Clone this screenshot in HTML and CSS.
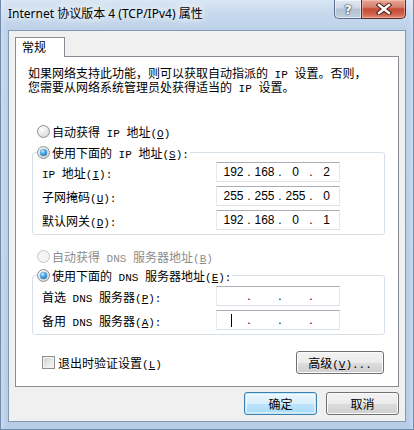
FILE: index.html
```html
<!DOCTYPE html>
<html lang="zh-CN">
<head>
<meta charset="utf-8">
<title>Internet 协议版本 4 (TCP/IPv4) 属性</title>
<link rel="stylesheet" href="styles.css">
</head>
<body>
<div class="window">
  <div class="titlebar">
    <div class="title">Internet 协议版本 4 (TCP/IPv4) 属性</div>
    <div class="caption">
      <div class="cap help"><span class="q">?</span></div>
      <div class="cap close">
        <svg width="16" height="12" viewBox="0 0 16 12">
          <path d="M3 2 L13 10 M13 2 L3 10" stroke="#4a1a14" stroke-width="4.4" stroke-linecap="square" fill="none"/>
          <path d="M3 2 L13 10 M13 2 L3 10" stroke="#ffffff" stroke-width="2.4" stroke-linecap="square" fill="none"/>
        </svg>
      </div>
    </div>
  </div>
  <div class="client">
    <div class="tabs"><div class="tab">常规</div></div>
    <div class="panel">
      <div class="desc">
        <div class="line">如果网络支持此功能，则可以获取自动指派的<span class="en"> IP </span>设置。否则，</div>
        <div class="line">您需要从网络系统管理员处获得适当的<span class="en"> IP </span>设置。</div>
      </div>

      <div class="radio-row first"><span class="radio"></span><span>自动获得<span class="en"> IP </span>地址<span class="en">(<u>O</u>)</span></span></div>

      <fieldset class="group">
        <legend class="radio-row"><span class="radio on"></span><span>使用下面的<span class="en"> IP </span>地址<span class="en">(<u>S</u>):</span></span></legend>
        <div class="rows">
          <div class="row"><span class="lbl"><span class="en">IP </span>地址<span class="en">(<u>I</u>):</span></span>
            <div class="ip"><span class="oct">192</span><span class="dot">.</span><span class="oct">168</span><span class="dot">.</span><span class="oct">0</span><span class="dot">.</span><span class="oct">2</span></div></div>
          <div class="row"><span class="lbl">子网掩码<span class="en">(<u>U</u>):</span></span>
            <div class="ip"><span class="oct">255</span><span class="dot">.</span><span class="oct">255</span><span class="dot">.</span><span class="oct">255</span><span class="dot">.</span><span class="oct">0</span></div></div>
          <div class="row"><span class="lbl">默认网关<span class="en">(<u>D</u>):</span></span>
            <div class="ip"><span class="oct">192</span><span class="dot">.</span><span class="oct">168</span><span class="dot">.</span><span class="oct">0</span><span class="dot">.</span><span class="oct">1</span></div></div>
        </div>
      </fieldset>

      <div class="radio-row dns-auto disabled"><span class="radio"></span><span>自动获得<span class="en"> DNS </span>服务器地址<span class="en">(<u>B</u>)</span></span></div>

      <fieldset class="group dns">
        <legend class="radio-row"><span class="radio on"></span><span>使用下面的<span class="en"> DNS </span>服务器地址<span class="en">(<u>E</u>):</span></span></legend>
        <div class="rows">
          <div class="row"><span class="lbl">首选<span class="en"> DNS </span>服务器<span class="en">(<u>P</u>):</span></span>
            <div class="ip"><span class="oct"></span><span class="dot">.</span><span class="oct"></span><span class="dot">.</span><span class="oct"></span><span class="dot">.</span><span class="oct"></span></div></div>
          <div class="row"><span class="lbl">备用<span class="en"> DNS </span>服务器<span class="en">(<u>A</u>):</span></span>
            <div class="ip"><span class="oct"><span class="caret"></span></span><span class="dot">.</span><span class="oct"></span><span class="dot">.</span><span class="oct"></span><span class="dot">.</span><span class="oct"></span></div></div>
        </div>
      </fieldset>

      <div class="foot">
        <div class="check-row"><span class="check"></span><span>退出时验证设置<span class="en">(<u>L</u>)</span></span></div>
        <button class="btn adv">高级<span class="en">(<u>V</u>)...</span></button>
      </div>
    </div>
    <div class="dlg-btns">
      <button class="btn default">确定</button>
      <button class="btn">取消</button>
    </div>
  </div>
</div>
</body>
</html>
```
FILE: styles.css
```css
* { box-sizing: border-box; }
html, body { margin: 0; padding: 0; background: #ffffff; }

.window {
  width: 414px;
  height: 430px;
  display: flex;
  flex-direction: column;
  border: 1px solid #6f8aab;
  border-top: none;
  background:
    linear-gradient(90deg, rgba(255,255,255,0.25) 0, rgba(255,255,255,0) 6px, rgba(255,255,255,0) 407px, rgba(255,255,255,0.25) 412px),
    linear-gradient(180deg, #d9e6f4 0, #c6d8ed 14px, #bcd1ea 30px, #b7cde7 100%);
  font-family: "Noto Sans CJK SC", sans-serif;
  font-size: 12px;
  color: #000;
}

.titlebar {
  height: 30px;
  flex: none;
  display: flex;
  align-items: flex-start;
  padding: 0 7px 0 7px;
}
.title {
  margin-top: 6px;
  line-height: 16px;
  font-family: "Noto Sans", "Noto Sans CJK SC", sans-serif;
  font-size: 12px;
  color: #000;
  text-shadow: 0 0 6px #f4f8fd, 0 0 10px #f4f8fd, 0 0 14px #ffffff;
}
.caption {
  margin-left: auto;
  display: flex;
}
.cap {
  height: 19px;
  display: flex;
  align-items: center;
  justify-content: center;
  border: 1px solid #5b6f8c;
  border-top: none;
}
.help {
  width: 27px;
  border-right: none;
  border-radius: 0 0 0 5px;
  background: linear-gradient(180deg, #e2e9f2 0, #cdd7e3 45%, #b3c1d3 50%, #c2cfde 100%);
  box-shadow: inset 0 0 0 1px rgba(255,255,255,0.55);
}
.help .q {
  font-family: "DejaVu Sans", sans-serif;
  font-weight: bold;
  font-size: 13px;
  line-height: 13px;
  color: #fff;
  text-shadow: 0 0 1px #2e3d55, 0 0 1px #2e3d55, 0 0 2px #2e3d55;
}
.close {
  width: 45px;
  border-color: #5a2a24;
  border-radius: 0 0 5px 0;
  background: linear-gradient(180deg, #e8a595 0, #d7806e 40%, #c44a33 50%, #cf6350 80%, #e08a70 100%);
  box-shadow: inset 0 0 0 1px rgba(255,220,210,0.45);
}
.close svg { display: block; }

.client {
  flex: 1;
  margin: 0 7px 7px 7px;
  background: #f0f0f0;
  border: 1px solid #8397b0;
  padding: 6px 6px 0 6px;
  display: flex;
  flex-direction: column;
}

.tabs { display: flex; }
.tab {
  width: 50px;
  height: 20px;
  border: 1px solid #898c95;
  border-bottom: none;
  background: #fff;
  margin-bottom: -1px;
  position: relative;
  z-index: 1;
  padding-left: 6px;
  line-height: 18px;
}

.panel {
  height: 331px;
  flex: none;
  border: 1px solid #898c95;
  background: #fff;
  display: flex;
  flex-direction: column;
}

.en {
  font-family: "Liberation Mono", monospace;
  font-size: 11px;
  line-height: 1;
}
u { text-decoration: underline; text-underline-offset: 1px; }

.desc {
  margin: 9px 0 0 12px;
  display: flex;
  flex-direction: column;
}
.desc .line {
  height: 14px;
  line-height: 14px;
  white-space: nowrap;
}

.radio-row {
  display: flex;
  align-items: center;
  height: 16px;
  gap: 2px;
  white-space: nowrap;
}
.radio-row.first { margin: 29px 0 0 21px; }
.radio-row.dns-auto { margin: 13px 0 0 21px; }
.radio-row.disabled { color: #8c8c8c; }

.radio {
  flex: none;
  width: 13px;
  height: 13px;
  border-radius: 50%;
  border: 1px solid #8e8f8f;
  background: radial-gradient(circle at 35% 30%, #ffffff 0, #eaeaea 45%, #cfcfcf 100%);
  position: relative;
}
.disabled .radio {
  border-color: #c6c6c6;
  background: #f4f4f4;
}
.radio.on::after {
  content: "";
  position: absolute;
  left: 2px;
  top: 2px;
  width: 7px;
  height: 7px;
  border-radius: 50%;
  background: radial-gradient(circle at 38% 32%, #c8ecff 0, #47a7ea 40%, #125ea6 100%);
  box-shadow: 0 0 1px #0e4f8c;
}

.group {
  margin: 5px 13px 0 16px;
  border: 1px solid #d5dfe5;
  border-radius: 3px;
  padding: 2px 0 4px 9px;
  min-width: 0;
}
.group.dns { margin-top: 3px; padding-top: 3px; }
.group legend {
  margin-left: -5px;
  padding: 0 1px 0 0;
  background: #fff;
}

.rows {
  display: flex;
  flex-direction: column;
  gap: 4px;
}
.row {
  display: flex;
  align-items: center;
  height: 20px;
  white-space: nowrap;
}
.lbl { width: 174px; flex: none; }

.ip {
  width: 124px;
  height: 20px;
  flex: none;
  display: flex;
  align-items: center;
  padding-left: 3px;
  background: #fff;
  border: 1px solid #e3e9ef;
  border-top-color: #abadb3;
  border-bottom-color: #dbdfe6;
  font-family: "Liberation Sans", sans-serif;
  font-size: 12px;
  overflow: hidden;
}
.oct {
  width: 27px;
  flex: none;
  text-align: center;
  display: flex;
  justify-content: center;
  align-items: center;
  height: 14px;
}
.dot {
  width: 4px;
  flex: none;
  text-align: center;
  line-height: 14px;
}
.caret {
  display: block;
  width: 1px;
  height: 13px;
  background: #000;
  margin-right: 4px;
}

.foot {
  margin: 16px 14px 0 26px;
  display: flex;
  align-items: center;
  justify-content: space-between;
}
.check-row {
  display: flex;
  align-items: center;
  gap: 3px;
  white-space: nowrap;
}
.check {
  width: 13px;
  height: 13px;
  border: 1px solid #8e8f8f;
  background: linear-gradient(135deg, #cbcfd5 0, #e4e6e9 50%, #f6f6f6 100%);
  box-shadow: inset 0 0 0 1px #f2f2f2;
}

.btn {
  height: 23px;
  padding: 0;
  font-family: "Noto Sans CJK SC", sans-serif;
  font-size: 12px;
  color: #000;
  border: 1px solid #707070;
  border-radius: 3px;
  background: linear-gradient(180deg, #f2f2f2 0, #ebebeb 50%, #dddddd 50%, #cfcfcf 100%);
  box-shadow: inset 0 0 0 1px #fbfbfb;
  white-space: nowrap;
}
.btn.adv { width: 88px; }
.btn.default {
  border-color: #3c7fb1;
  background: linear-gradient(180deg, #eaf6fd 0, #d9f0fc 50%, #bee6fd 50%, #a7d9f5 100%);
  box-shadow: inset 0 0 0 1px #c4e8fb, inset 0 0 0 2px rgba(255,255,255,0.5);
}

.dlg-btns {
  display: flex;
  justify-content: flex-end;
  gap: 9px;
  margin-top: 5px;
}
.dlg-btns .btn { width: 73px; }
```
